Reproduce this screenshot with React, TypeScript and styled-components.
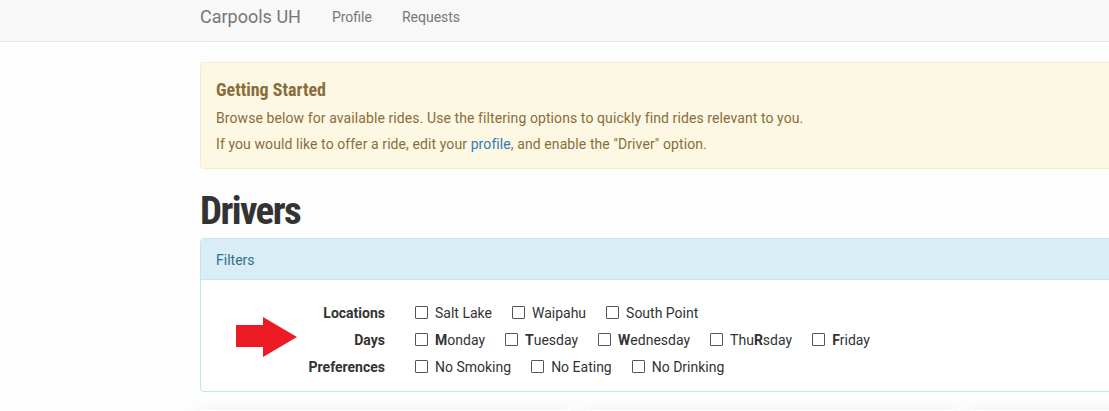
import React from "react";
import styled, { createGlobalStyle } from "styled-components";

const Global = createGlobalStyle`
  html, body { margin: 0; padding: 0; }
  body {
    background: #fdfdfd;
    font-family: Roboto, "Liberation Sans", Arial, sans-serif;
    font-size: 14px;
    color: #333;
    overflow: hidden;
  }
`;

const Navbar = styled.nav`
  height: 41px;
  background: #f8f8f8;
  border-bottom: 1px solid #e7e7e7;
  display: flex;
  align-items: center;
  padding-left: 200px;
`;

const Brand = styled.a`
  font-size: 18px;
  color: #777;
  margin-right: 31px;
  text-decoration: none;
  line-height: 20px;
  margin-top: -7px;
`;

const NavLink = styled.a`
  font-size: 14px;
  color: #777;
  margin-right: 30px;
  text-decoration: none;
  line-height: 20px;
  margin-top: -7px;
`;

const Container = styled.main`
  padding-left: 200px;
  padding-top: 20px;
  width: 1200px;
`;

const Alert = styled.div`
  background: #fcf8e3;
  border: 1px solid #faebcc;
  border-radius: 4px;
  color: #8a6d3b;
  padding: 15px 15px 11px 15px;
`;

const AlertHeading = styled.h4`
  font-family: "Roboto Condensed", Roboto, sans-serif;
  font-stretch: condensed;
  font-weight: 700;
  font-size: 18px;
  line-height: 24px;
  margin: 0 0 3px 0;
  color: #8a6d3b;
`;

const AlertText = styled.p`
  margin: 0;
  line-height: 26px;
  font-size: 14px;
  letter-spacing: 0.09px;
`;

const Link = styled.a`
  color: #337ab7;
  text-decoration: none;
`;

const Title = styled.h1`
  font-family: "Roboto Condensed", Roboto, sans-serif;
  font-stretch: condensed;
  font-weight: 700;
  font-size: 39px;
  letter-spacing: -1.6px;
  line-height: 44px;
  margin: 20px 0 5px 0;
  color: #333;
`;

const Panel = styled.section`
  border: 1px solid #bce8f1;
  border-radius: 4px;
  background: #fff;
`;

const PanelHeading = styled.div`
  background: #d9edf7;
  color: #31708f;
  border-bottom: 1px solid #bce8f1;
  padding: 11px 15px 9px 15px;
  line-height: 20px;
  font-size: 14px;
  border-radius: 3px 3px 0 0;
`;

const PanelBody = styled.div`
  position: relative;
  padding: 19px 15px 11px 15px;
  display: grid;
  grid-template-columns: 169px 1fr;
  column-gap: 30px;
  grid-auto-rows: 27px;
  align-items: center;
`;

const RowLabel = styled.div`
  text-align: right;
  font-weight: 700;
  color: #333;
`;

const Options = styled.div`
  display: flex;
  align-items: center;
  gap: 20px;
`;

const Option = styled.label`
  display: flex;
  align-items: center;
  gap: 7px;
  color: #333;
`;

const Box = styled.input`
  appearance: none;
  margin: 0;
  width: 13px;
  height: 13px;
  border: 1px solid #555;
  background: #fff;
  border-radius: 1px;
`;

const Arrow = styled.svg`
  position: absolute;
  left: 35px;
  top: 37px;
`;

const Cards = styled.div`
  display: flex;
  gap: 15px;
  margin-top: 18px;
`;

const Card = styled.div`
  width: 370px;
  height: 200px;
  background: #fff;
  box-shadow: 0 2px 14px rgba(0, 0, 0, 0.08);
`;

const B = styled.b`
  font-weight: 700;
`;

const Check: React.FC<{ children: React.ReactNode }> = ({ children }) => (
  <Option>
    <Box type="checkbox" />
    <span>{children}</span>
  </Option>
);

export default function App() {
  return (
    <>
      <Global />
      <Navbar>
        <Brand>Carpools UH</Brand>
        <NavLink>Profile</NavLink>
        <NavLink>Requests</NavLink>
      </Navbar>
      <Container>
        <Alert>
          <AlertHeading>Getting Started</AlertHeading>
          <AlertText>
            Browse below for available rides. Use the filtering options to quickly find rides relevant to you.
          </AlertText>
          <AlertText>
            If you would like to offer a ride, edit your <Link>profile</Link>, and enable the "Driver" option.
          </AlertText>
        </Alert>
        <Title>Drivers</Title>
        <Panel>
          <PanelHeading>Filters</PanelHeading>
          <PanelBody>
            <Arrow width="62" height="40" viewBox="0 0 62 40">
              <polygon
                points="0,8 27,8 27,0 61,20 27,40 27,30 0,30"
                fill="#ed1c24"
              />
            </Arrow>
            <RowLabel>Locations</RowLabel>
            <Options>
              <Check>Salt Lake</Check>
              <Check>Waipahu</Check>
              <Check>South Point</Check>
            </Options>
            <RowLabel>Days</RowLabel>
            <Options>
              <Check><B>M</B>onday</Check>
              <Check><B>T</B>uesday</Check>
              <Check><B>W</B>ednesday</Check>
              <Check>Thu<B>R</B>sday</Check>
              <Check><B>F</B>riday</Check>
            </Options>
            <RowLabel>Preferences</RowLabel>
            <Options>
              <Check>No Smoking</Check>
              <Check>No Eating</Check>
              <Check>No Drinking</Check>
            </Options>
          </PanelBody>
        </Panel>
        <Cards>
          <Card />
          <Card />
          <Card />
        </Cards>
      </Container>
    </>
  );
}
